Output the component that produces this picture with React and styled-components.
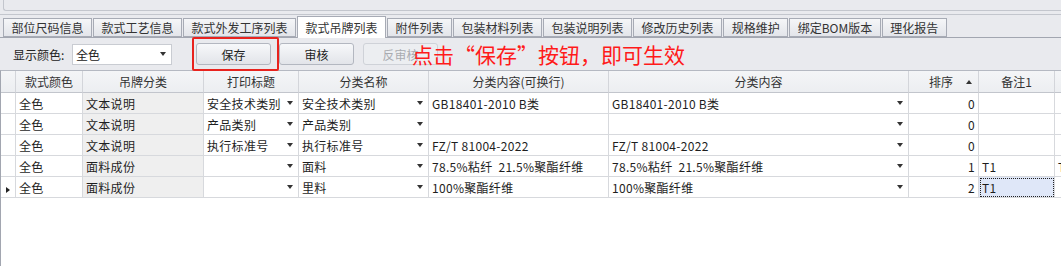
import React from 'react'
import styled, { createGlobalStyle } from 'styled-components'

const tabs = [
	'部位尺码信息',
	'款式工艺信息',
	'款式外发工序列表',
	'款式吊牌列表',
	'附件列表',
	'包装材料列表',
	'包装说明列表',
	'修改历史列表',
	'规格维护',
	'绑定BOM版本',
	'理化报告',
]

const columns = [
	{ key: 'ind', width: 16, title: '' },
	{ key: 'color', width: 67, title: '款式颜色' },
	{ key: 'kind', width: 121, title: '吊牌分类' },
	{ key: 'print', width: 95, title: '打印标题' },
	{ key: 'name', width: 130, title: '分类名称' },
	{ key: 'wrap', width: 180, title: '分类内容(可换行)' },
	{ key: 'content', width: 300, title: '分类内容' },
	{ key: 'sort', width: 70, title: '排序' },
	{ key: 'note', width: 76, title: '备注1' },
	{ key: 'extra', width: 80, title: '' },
]

const rows = [
	['全色', '文本说明', '安全技术类别', '安全技术类别', 'GB18401-2010 B类', 'GB18401-2010 B类', 0, '', ''],
	['全色', '文本说明', '产品类别', '产品类别', '', '', 0, '', ''],
	['全色', '文本说明', '执行标准号', '执行标准号', 'FZ/T 81004-2022', 'FZ/T 81004-2022', 0, '', ''],
	['全色', '面料成份', '', '面料', '78.5%粘纤  21.5%聚酯纤维', '78.5%粘纤  21.5%聚酯纤维', 1, 'T1', 'T1'],
	['全色', '面料成份', '', '里料', '100%聚酯纤维', '100%聚酯纤维', 2, 'T1', ''],
]

const App = () => {
	return (
		<Page>
			<GlobalStyle />
			<TopPanel />
			<Rule />
			<TabStrip>
				{tabs.map((t) => (
					<Tab key={t} $active={t === '款式吊牌列表'}>
						{t}
					</Tab>
				))}
			</TabStrip>
			<Toolbar>
				<Label>显示颜色:</Label>
				<Select>
					<span>全色</span>
					<Arrow />
				</Select>
				<Highlight>
					<Button>保存</Button>
				</Highlight>
				<Button>审核</Button>
				<Button $disabled>反审核</Button>
				<Note>点击“保存”按钮，即可生效</Note>
			</Toolbar>
			<Grid>
				<Table>
					<colgroup>
						{columns.map((c) => (
							<col key={c.key} style={{ width: c.width }} />
						))}
					</colgroup>
					<thead>
						<tr>
							{columns.map((c) => (
								<Th key={c.key}>
									{c.key === 'sort' ? (
										<SortHead>
											<span>{c.title}</span>
											<SortArrow />
										</SortHead>
									) : (
										c.title
									)}
								</Th>
							))}
						</tr>
					</thead>
					<tbody>
						{rows.map((r, i) => {
							const current = i === rows.length - 1
							return (
								<tr key={i}>
									<Indicator>{current && <RowMark />}</Indicator>
									<Td>{r[0]}</Td>
									<Td $readonly>{r[1]}</Td>
									<Td>
										<Combo>
											<span>{r[2]}</span>
											<Arrow />
										</Combo>
									</Td>
									<Td>
										<Combo>
											<span>{r[3]}</span>
											<Arrow />
										</Combo>
									</Td>
									<Td>{r[4]}</Td>
									<Td>
										<Combo>
											<span>{r[5]}</span>
											<Arrow />
										</Combo>
									</Td>
									<Td $num>{r[6]}</Td>
									<Td $selected={current}>{r[7]}</Td>
									<Td>{r[8]}</Td>
								</tr>
							)
						})}
					</tbody>
				</Table>
			</Grid>
		</Page>
	)
}

export default App

const GlobalStyle = createGlobalStyle`
	* {
		box-sizing: border-box;
	}
	body {
		margin: 0;
		font-family: "Noto Sans CJK SC", "Noto Sans", sans-serif;
		font-size: 12px;
		color: #222;
		background: #e9eaee;
	}
`

const Page = styled.div`
	width: 1061px;
	height: 266px;
	display: flex;
	flex-direction: column;
	background: #e9eaee;
	overflow: hidden;
`
const TopPanel = styled.div`
	height: 11px;
	margin-left: 3px;
	border: 1px solid #c3c6cd;
	border-top: none;
	border-right: none;
	border-bottom-left-radius: 3px;
	flex-shrink: 0;
`
const Rule = styled.div`
	height: 1px;
	margin-top: 3px;
	background: #c3c6cd;
	flex-shrink: 0;
`
const TabStrip = styled.div`
	display: flex;
	align-items: flex-end;
	gap: 1px;
	height: 23px;
	padding-left: 3px;
	border-bottom: 1px solid #a2a6b0;
	flex-shrink: 0;
`
const Tab = styled.div`
	height: ${(p) => (p.$active ? '22px' : '19px')};
	margin-bottom: ${(p) => (p.$active ? '-1px' : '0')};
	padding: 0 7.5px;
	display: flex;
	align-items: center;
	justify-content: center;
	border: 1px solid #a7abb5;
	border-bottom: ${(p) => (p.$active ? 'none' : '1px solid #a7abb5')};
	background: ${(p) => (p.$active ? '#ffffff' : 'linear-gradient(#f5f6f8, #e3e5ea)')};
	color: #333;
	white-space: nowrap;
	line-height: 1;
`
const Toolbar = styled.div`
	position: relative;
	height: 32px;
	display: flex;
	align-items: center;
	padding-left: 13px;
	flex-shrink: 0;
`
const Label = styled.span`
	width: 59px;
	color: #222;
`
const Select = styled.div`
	width: 100px;
	height: 21px;
	display: flex;
	align-items: center;
	justify-content: space-between;
	padding: 0 5px 0 3px;
	background: #fff;
	border: 1px solid #c9ccd2;
`
const Arrow = styled.i`
	width: 0;
	height: 0;
	border-left: 3.5px solid transparent;
	border-right: 3.5px solid transparent;
	border-top: 4px solid #333;
	flex-shrink: 0;
`
const Highlight = styled.div`
	margin-left: 20px;
	padding: 4px 4px 4px 2px;
	border: 2px solid #e8231e;
	border-radius: 2px;
	display: flex;
`
const Button = styled.button`
	width: 75px;
	height: 22px;
	margin-left: ${(p) => (p.$disabled ? '7px' : '0')};
	margin-right: ${(p) => (p.$disabled ? '0' : '2px')};
	font-family: inherit;
	font-size: 12px;
	color: ${(p) => (p.$disabled ? '#a9abb0' : '#222')};
	background: ${(p) => (p.$disabled ? '#eceef1' : 'linear-gradient(#f7f8fa, #e2e4e9)')};
	border: 1px solid ${(p) => (p.$disabled ? '#cfd2d8' : '#b3b7c0')};
	border-radius: 3px;
	padding: 0;
`
const Note = styled.span`
	position: absolute;
	left: 412px;
	top: 1px;
	font-size: 21px;
	color: #ff1a1a;
	white-space: nowrap;
	line-height: 30px;
`
const Grid = styled.div`
	flex: 1;
	background: #fff;
	border-top: 1px solid #b5b9c2;
	border-left: 1px solid #a2a6b0;
	overflow: hidden;
`
const Table = styled.table`
	table-layout: fixed;
	width: 1135px;
	border-collapse: separate;
	border-spacing: 0;
	margin-left: -1px;
`
const Th = styled.th`
	height: 22px;
	padding: 0 3px;
	font-weight: normal;
	color: #333;
	text-align: center;
	white-space: nowrap;
	background: linear-gradient(#f4f5f7, #eceef1);
	border-right: 1px solid #d3d5da;
	border-bottom: 1px solid #c2c5cc;
`
const SortHead = styled.div`
	display: flex;
	align-items: center;
	span {
		flex: 1;
		text-align: center;
		padding-left: 4px;
	}
`
const SortArrow = styled.i`
	width: 0;
	height: 0;
	margin-right: 3px;
	border-left: 3.5px solid transparent;
	border-right: 3.5px solid transparent;
	border-bottom: 4px solid #333;
`
const Td = styled.td`
	height: 21px;
	padding: 0 3px 0 3px;
	white-space: pre;
	overflow: hidden;
	letter-spacing: 0.3px;
	text-align: ${(p) => (p.$num ? 'right' : 'left')};
	color: #1e1e1e;
	background: ${(p) => (p.$selected ? '#dfe7f8' : p.$readonly ? '#efefef' : '#fff')};
	border-right: 1px solid #d7d9dd;
	border-bottom: 1px solid #d7d9dd;
	outline: ${(p) => (p.$selected ? '1px dotted #222' : 'none')};
	outline-offset: -2px;
`
const Indicator = styled.td`
	height: 21px;
	padding: 0;
	text-align: center;
	background: #fff;
	border-right: 1px solid #d7d9dd;
	border-bottom: 1px solid #d7d9dd;
`
const RowMark = styled.i`
	display: inline-block;
	width: 0;
	height: 0;
	margin-left: 1px;
	border-top: 3.5px solid transparent;
	border-bottom: 3.5px solid transparent;
	border-left: 4px solid #222;
`
const Combo = styled.div`
	display: flex;
	align-items: center;
	justify-content: space-between;
	padding-right: 2px;
`
